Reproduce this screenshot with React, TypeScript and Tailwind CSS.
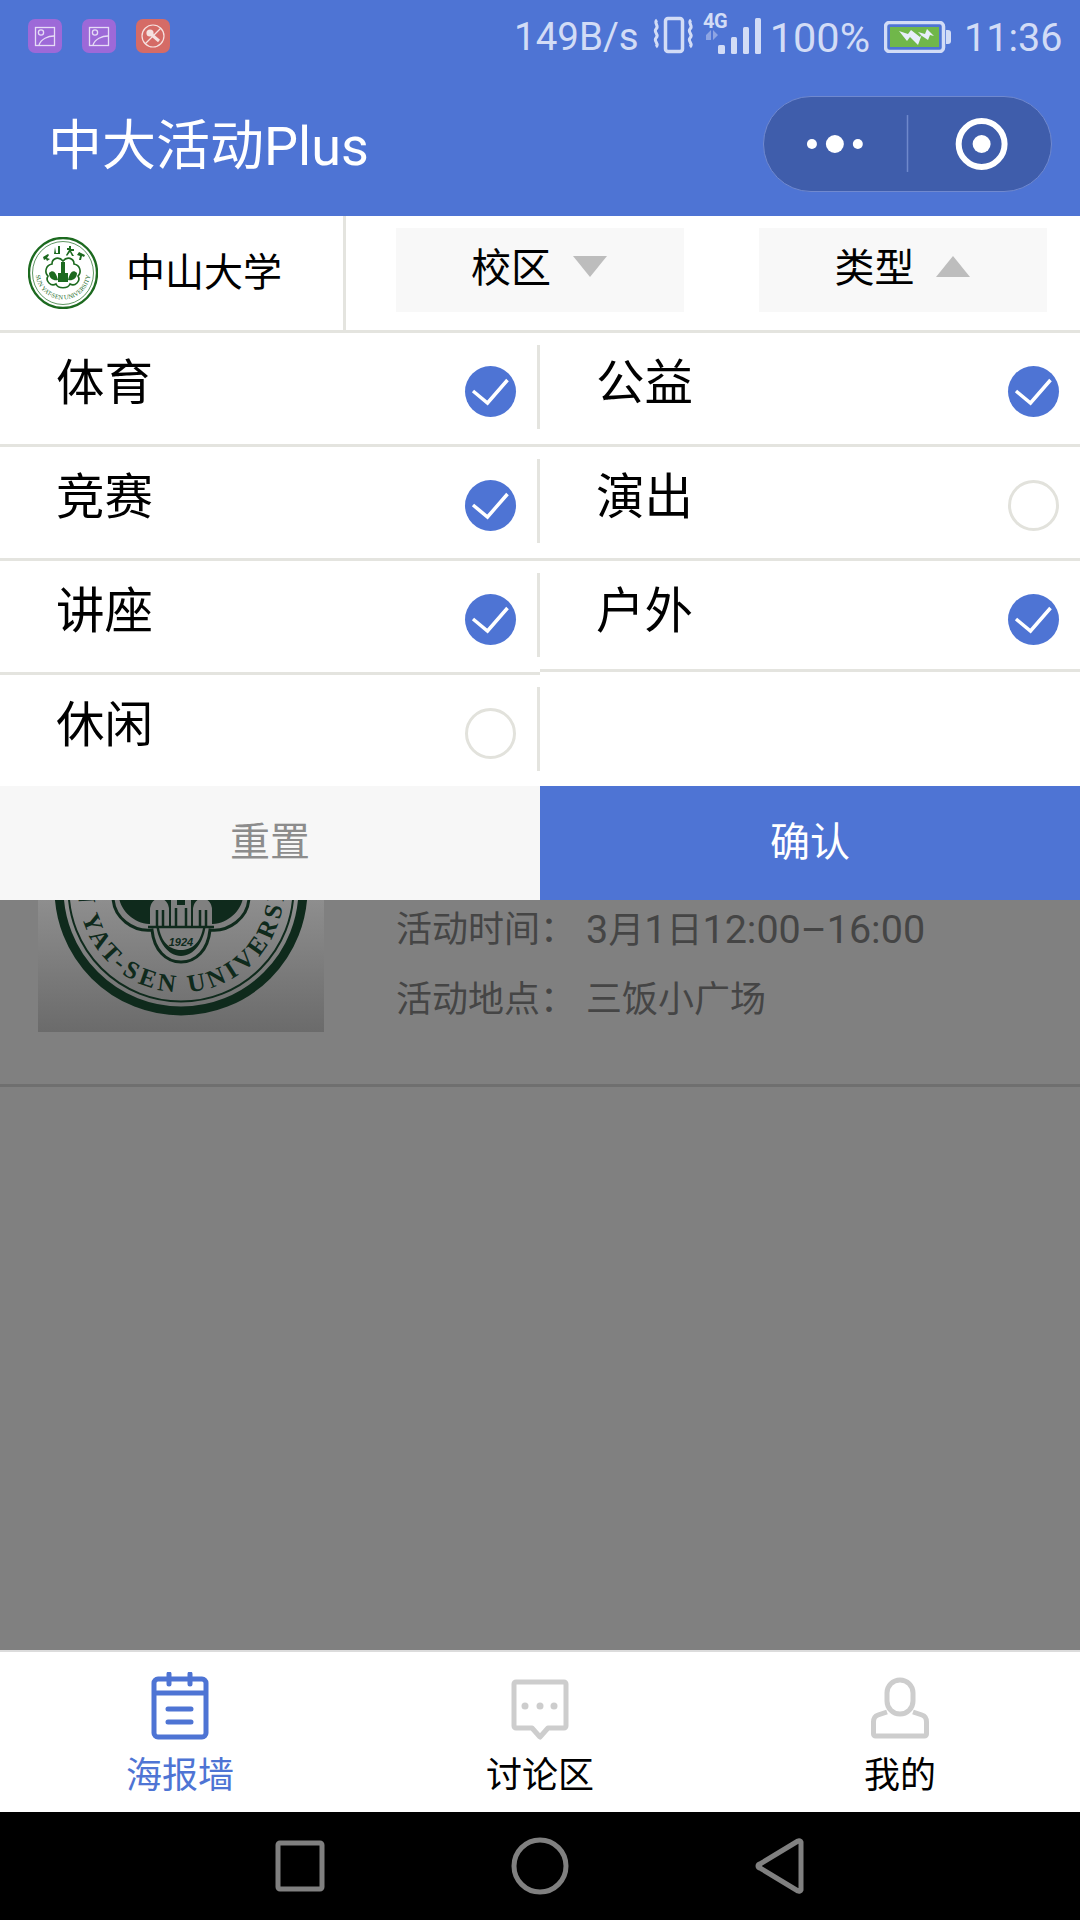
import React from "react";

const rows = [
  [
    { label: "体育", on: true },
    { label: "竞赛", on: true },
    { label: "讲座", on: true },
    { label: "休闲", on: false },
  ],
  [
    { label: "公益", on: true },
    { label: "演出", on: false },
    { label: "户外", on: true },
  ],
];

function Check({ on }: { on: boolean }) {
  if (!on)
    return <div className="mt-[33px] h-[51px] w-[51px] shrink-0 rounded-full border-[3px] border-[#e2e2dc] bg-white" />;
  return (
    <div className="mt-[33px] flex h-[51px] w-[51px] shrink-0 items-center justify-center rounded-full bg-[#4e74d4]">
      <svg width="51" height="51" viewBox="0 0 51 51" fill="none">
        <path d="M8 25 L22.500 37 L42.500 14" stroke="white" strokeWidth="3.500" />
      </svg>
    </div>
  );
}

function Option({ label, on, left, last, short }: { label: string; on: boolean; left: boolean; last?: boolean; short?: boolean }) {
  return (
    <div className={`flex w-full ${short ? "h-[111px]" : "h-[114px]"} ${last ? "" : "border-b-[3px] border-[#e4e4df]"}`}>
      <div className="flex-1 pl-[56px] pt-[20px] text-[48.500px] leading-[62px] text-black">{label}</div>
      <Check on={on} />
      {left ? <div className="ml-[21px] mt-[12px] h-[84px] w-[3px] bg-[#e4e4df]" /> : <div className="w-[21px]" />}
    </div>
  );
}

function SmallSeal() {
  return (
    <svg width="70" height="72" viewBox="0 0 70 72" className="shrink-0">
      <defs>
        <path id="smallArc" d="M9 26 A27.500 27.500 0 1 0 61 26" />
      </defs>
      <ellipse cx="35" cy="36" rx="34" ry="35" fill="none" stroke="#1c6a1f" strokeWidth="2.400" />
      <ellipse cx="35" cy="36" rx="30.500" ry="31.500" fill="none" stroke="#1c6a1f" strokeWidth="0.700" />
      <path d="M35 24 C39 19 46 21 46 27 C52 28 54 35 50 39 C53 44 47 50 42 47 C40 52 30 52 28 47 C23 50 17 44 20 39 C16 35 18 28 24 27 C24 21 31 19 35 24Z" fill="#fff" stroke="#1c6a1f" strokeWidth="1.600" />
      <path d="M21 36 C25 32 28 35 30 43 C26 44 21 42 21 36ZM49 36 C45 32 42 35 40 43 C44 44 49 42 49 36Z" fill="#1c6a1f" />
      <rect x="33" y="25" width="4" height="20" fill="#1c6a1f" />
      <rect x="30" y="36" width="10" height="9" fill="#1c6a1f" />
      <g fill="#1c6a1f">
        <path d="M15 20 l5 -3 l1 1 l-2 3 l3 1 l-3 2 l-1 -2 l-2 1z" />
        <path d="M27 10 l1 6 l2 0 l0 -7 l2 0 l0 8 l-6 0z" />
        <path d="M41 9 l2 0 l0 3 l3 0 l0 2 l-3 0 l3 5 l-2 0 l-2 -4 l-3 4 l-1 -1 l3 -5 l-2 0 l0 -2 l2 0z" />
        <path d="M51 15 l6 3 l-1 2 l-2 -1 l-1 4 l-2 0 l1 -4 l-3 -1z" />
      </g>
      <text fontFamily="'Liberation Serif', serif" fontSize="6.400" fill="#1c6a1f" textAnchor="middle">
        <textPath href="#smallArc" startOffset="50%">SUN YAT-SEN UNIVERSITY</textPath>
      </text>
    </svg>
  );
}

function BigSeal() {
  const g = "#0f2a1c";
  const bg = "#808080";
  return (
    <svg width="286" height="132" viewBox="0 0 286 132" className="block">
      <defs>
        <path id="bigArc" d="M91.500 -100 A103 103 0 1 0 194.500 -100" />
      </defs>
      <circle cx="143" cy="-11" r="122" fill="none" stroke={g} strokeWidth="9" />
      <circle cx="143" cy="-11" r="112.500" fill="none" stroke={g} strokeWidth="2" />
      <text fontFamily="'Liberation Serif', serif" fontSize="25" fontWeight="700" fill={g} letterSpacing="4" textAnchor="middle">
        <textPath href="#bigArc" startOffset="50%">SUN YAT-SEN UNIVERSITY</textPath>
      </text>
      <path d="M75 -2 C76 18 95 32 114 30 C116 50 128 62 143 62 C158 62 170 50 172 30 C191 32 210 18 211 -2" fill={bg} stroke={g} strokeWidth="3" />
      <path d="M81 -2 C84 14 100 26 118 24 C120 42 130 56 143 56 C156 56 166 42 168 24 C186 26 202 14 205 -2Z" fill={g} />
      <path d="M121 28 C124 44 133 50 143 50 C153 50 162 44 165 28Z" fill={bg} />
      <path d="M113 27 L113 10 C113 -4 130 -4 130 10 L130 27 M156 27 L156 10 C156 -4 173 -4 173 10 L173 27" fill={bg} stroke={bg} strokeWidth="2" />
      <path d="M133 -2 H153 V27 H133Z" fill={bg} />
      <path d="M119 27 L119 10 M125 27 L125 10 M138 27 L138 8 M148 27 L148 8 M162 27 L162 10 M168 27 L168 10 M110 27 L176 27" stroke={g} strokeWidth="2.500" />
      <rect x="139" y="-5" width="8" height="10" fill={g} />
      <text x="143" y="46" textAnchor="middle" fontFamily="'Liberation Sans', sans-serif" fontStyle="italic" fontSize="11" fontWeight="700" fill={g}>1924</text>
    </svg>
  );
}

function C({ children }: { children: React.ReactNode }) {
  return <span className="text-[36px]">{children}</span>;
}

export default function App() {
  return (
    <div className="flex h-[1920px] w-[1080px] flex-col overflow-hidden bg-[#808080] [font-family:Roboto,'Noto_Sans_CJK_SC',sans-serif]">
      {/* status + title */}
      <header className="h-[216px] shrink-0 bg-[#4e74d4]">
        <div className="flex h-[72px] items-center pl-[28px] text-[#d2dcf6]">
          <svg width="142" height="34" viewBox="0 0 142 34" fill="none">
            <rect width="34" height="34" rx="7" fill="#9d69d8" />
            <rect x="54" width="34" height="34" rx="7" fill="#9d69d8" />
            <rect x="108" width="34" height="34" rx="7" fill="#d56b66" />
            <g stroke="#e6dcf6" strokeWidth="1.300">
              <rect x="7.500" y="8.500" width="19" height="18" />
              <circle cx="13" cy="13.500" r="2.600" />
              <path d="M11 26 C13 20 20 17 26 17" />
              <rect x="61.500" y="8.500" width="19" height="18" />
              <circle cx="67" cy="13.500" r="2.600" />
              <path d="M65 26 C67 20 74 17 80 17" />
            </g>
            <circle cx="125" cy="17" r="11" stroke="#f5e2e0" strokeWidth="1.200" />
            <circle cx="122" cy="14" r="3.600" fill="#f5e2e0" />
            <path d="M124 16 L131 22" stroke="#f5e2e0" strokeWidth="3" />
            <path d="M117 25 L133 9" stroke="#f5e2e0" strokeWidth="1.200" />
          </svg>
          <span className="ml-[344px] mt-[3px] text-[38.500px] leading-none">149B/s</span>
          <svg width="110" height="46" viewBox="0 0 110 46" className="ml-[12px] overflow-visible" fill="none">
            <rect x="14.500" y="5.500" width="17" height="33" rx="2.500" stroke="#d2dcf6" strokeWidth="3.500" />
            <path d="M6 7 C2 10 9 13 5 16 C2 19 9 22 5 25 C2 28 9 31 5 34 M40 7 C36 10 43 13 39 16 C36 19 43 22 39 25 C36 28 43 31 39 34" stroke="#d2dcf6" strokeWidth="3" />
            <text x="52" y="15" fontFamily="Roboto, sans-serif" fontSize="20" fontWeight="700" fill="#d2dcf6" letterSpacing="-0.500">4G</text>
            <path d="M55 22 L55 27 L60 27 L60 17 Z M62 17 L62 27 L67 22 Z" fill="#8ea5e3" />
            <rect x="67" y="32" width="7" height="9" rx="1.500" fill="#d2dcf6" />
            <rect x="80" y="24" width="6" height="17" rx="1.500" fill="#d2dcf6" />
            <rect x="92" y="14" width="6" height="27" rx="1.500" fill="#d2dcf6" />
            <rect x="104" y="5" width="6" height="36" rx="1.500" fill="#d2dcf6" />
          </svg>
          <span className="ml-[9px] mt-[3px] text-[41.500px] leading-none">100%</span>
          <svg width="68" height="32" viewBox="0 0 68 32" className="ml-[14px] mt-[2px]" fill="none">
            <rect x="1.500" y="1.500" width="58" height="29" rx="4" stroke="#d2dcf6" strokeWidth="3.500" />
            <rect x="6" y="6" width="49" height="20" fill="#70b74a" />
            <path d="M62 9 h2 a3 3 0 0 1 3 3 v8 a3 3 0 0 1 -3 3 h-2z" fill="#d2dcf6" />
            <path d="M15 10 L24 13 L27 9 L36 16 L38 13 L34 24 L26 16 L23 20Z" fill="#e8eefb" />
            <path d="M34 11 L41 13 L43 8 L50 15 L46 14 L44 19 L38 15Z" fill="#e8eefb" />
          </svg>
          <span className="ml-[12px] mt-[3px] text-[39.500px] leading-none">11:36</span>
        </div>
        <div className="relative flex h-[144px] items-center">
          <h1 className="ml-[48px] mt-[6px] text-[54px] font-normal leading-none text-white">中大活动Plus</h1>
          <div className="absolute left-[763px] top-[24px] flex h-[96px] w-[289px] items-center rounded-full border-[1.500px] border-[#7089cf] bg-[#3f5dab]">
            <svg width="289" height="96" viewBox="0 0 289 96" fill="none" className="-ml-[1.500px]">
              <circle cx="49" cy="48" r="5" fill="white" />
              <circle cx="72" cy="48" r="9" fill="white" />
              <circle cx="95" cy="48" r="5" fill="white" />
              <rect x="144" y="19" width="1.500" height="57" fill="#6f89cc" />
              <circle cx="219" cy="48" r="23" stroke="white" strokeWidth="6" />
              <circle cx="219" cy="48" r="9" fill="white" />
            </svg>
          </div>
        </div>
      </header>

      {/* filter row */}
      <div className="flex h-[117px] shrink-0 border-b-[3px] border-[#e4e4df] bg-white">
        <div className="flex w-[346px] shrink-0 items-center border-r-[3px] border-[#e4e4df] pl-[28px]">
          <SmallSeal />
          <span className="ml-[28px] text-[39px] leading-none text-black">中山大学</span>
        </div>
        <div className="ml-[50px] mt-[12px] flex h-[84px] w-[288px] items-center justify-center gap-[22px] bg-[#f8f8f8]">
          <span className="ml-[-2px] mt-[-3px] text-[40px] leading-none text-black">校区</span>
          <div className="mt-[-7px] h-0 w-0 border-x-[17.500px] border-t-[21px] border-x-transparent border-t-[#bdbdbd]" />
        </div>
        <div className="ml-[75px] mt-[12px] flex h-[84px] w-[288px] items-center justify-center gap-[21px] bg-[#f8f8f8]">
          <span className="ml-[-2px] mt-[-3px] text-[40px] leading-none text-black">类型</span>
          <div className="mt-[-7px] h-0 w-0 border-x-[17.500px] border-b-[21px] border-x-transparent border-b-[#bdbdbd]" />
        </div>
      </div>

      {/* dropdown */}
      <div className="flex h-[453px] shrink-0 bg-white">
        <div className="w-[540px]">
          {rows[0].map((r, i) => (
            <Option key={r.label} label={r.label} on={r.on} left last={i === 3} short={i === 3} />
          ))}
        </div>
        <div className="w-[540px]">
          {rows[1].map((r, i) => (
            <Option key={r.label} label={r.label} on={r.on} left={false} short={i === 2} />
          ))}
        </div>
      </div>
      <div className="flex h-[114px] shrink-0">
        <div className="flex flex-1 items-center justify-center bg-[#f7f7f7] text-[40px] text-[#8c8c8c]">重置</div>
        <div className="flex flex-1 items-center justify-center bg-[#4e74d4] text-[40px] text-white">确认</div>
      </div>

      {/* dimmed card */}
      <div className="flex h-[187px] shrink-0 border-b-[3px] border-[#6f6f6f] bg-[#808080]">
        <div className="ml-[38px] h-[132px] w-[286px] overflow-hidden bg-gradient-to-b from-[#8e8e8e] to-[#6b6b6b]">
          <BigSeal />
        </div>
        <div className="ml-[72px] pt-[7px] text-[36px] leading-[46px] text-[#454545]">
          <div className="flex">
            <span className="w-[190px]">活动时间：</span>
            <span className="text-[39.500px]">3<C>月</C>1<C>日</C>12:00–16:00</span>
          </div>
          <div className="mt-[23px] flex">
            <span className="w-[190px]">活动地点：</span>
            <span>三饭小广场</span>
          </div>
        </div>
      </div>
      <div className="flex-1" />

      {/* tab bar */}
      <nav className="flex h-[162px] shrink-0 border-t-2 border-[#dcdcdc] bg-white pt-[20px]">
        <div className="flex w-[360px] flex-col items-center">
          <svg width="60" height="68" viewBox="0 0 60 68" fill="none">
            <rect x="4" y="7" width="52" height="58" rx="4" stroke="#4e74d4" strokeWidth="5" />
            <path d="M4 21 H56" stroke="#4e74d4" strokeWidth="5" />
            <path d="M19 2 V12 M40 2 V12" stroke="#4e74d4" strokeWidth="5" strokeLinecap="round" />
            <path d="M18 37 H41 M18 50 H41" stroke="#4e74d4" strokeWidth="5" strokeLinecap="round" />
          </svg>
          <span className="mt-[14px] text-[36px] leading-[44px] text-[#4e74d4]">海报墙</span>
        </div>
        <div className="flex w-[360px] flex-col items-center">
          <svg width="60" height="68" viewBox="0 0 60 68" fill="none">
            <path d="M6 10 H54 A2 2 0 0 1 56 12 V54 A2 2 0 0 1 54 56 H38 L30 65 L22 56 H6 A2 2 0 0 1 4 54 V12 A2 2 0 0 1 6 10Z" stroke="#cdcdcd" strokeWidth="5" strokeLinejoin="round" />
            <circle cx="15" cy="34" r="3.500" fill="#cdcdcd" />
            <circle cx="30" cy="34" r="3.500" fill="#cdcdcd" />
            <circle cx="44" cy="34" r="3.500" fill="#cdcdcd" />
          </svg>
          <span className="mt-[14px] text-[36px] leading-[44px] text-black">讨论区</span>
        </div>
        <div className="flex w-[360px] flex-col items-center">
          <svg width="60" height="68" viewBox="0 0 60 68" fill="none">
            <rect x="17" y="8" width="26" height="34" rx="13" stroke="#cdcdcd" strokeWidth="5" />
            <path d="M17 40 L8 43 C5 44 3.500 47 3.500 50 V62 A2 2 0 0 0 5.500 64 H54.500 A2 2 0 0 0 56.500 62 V50 C56.500 47 55 44 52 43 L43 40" stroke="#cdcdcd" strokeWidth="5" strokeLinejoin="round" />
          </svg>
          <span className="mt-[14px] text-[36px] leading-[44px] text-black">我的</span>
        </div>
      </nav>

      {/* android nav */}
      <div className="flex h-[108px] shrink-0 items-center bg-black">
        <svg width="1080" height="108" viewBox="0 0 1080 108" fill="none">
          <rect x="278" y="31" width="44" height="46" rx="2" stroke="#808080" strokeWidth="5" />
          <circle cx="540" cy="54" r="26" stroke="#808080" strokeWidth="5" />
          <path d="M801 30 V78 A2 2 0 0 1 798 79 L760 56 A2 2 0 0 1 760 52 L798 29 A2 2 0 0 1 801 30Z" stroke="#808080" strokeWidth="5" strokeLinejoin="round" />
        </svg>
      </div>
    </div>
  );
}
